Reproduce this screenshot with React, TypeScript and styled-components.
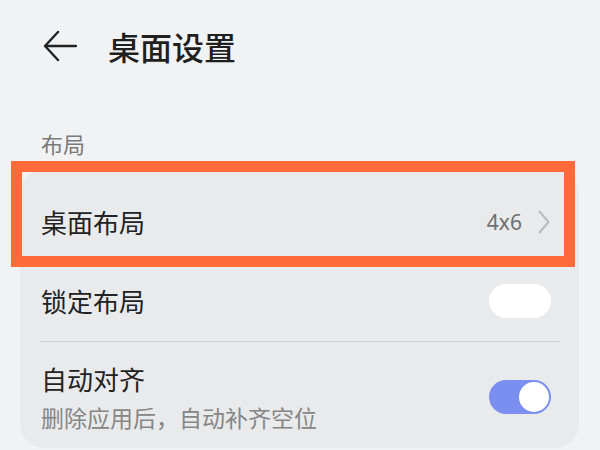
import React from "react";
import styled, { createGlobalStyle } from "styled-components";

const GlobalStyle = createGlobalStyle`
  html, body {
    margin: 0;
    padding: 0;
    background: #f1f2f4;
    font-family: "Noto Sans CJK SC", "Noto Sans", sans-serif;
  }
`;

const Page = styled.div`
  width: 600px;
  height: 450px;
  overflow: hidden;
  background: #f1f2f4;
`;

const Header = styled.div`
  display: flex;
  align-items: center;
  height: 92px;
  padding-left: 43px;
`;

const BackButton = styled.div`
  display: flex;
  width: 34px;
  height: 32px;
  margin-right: 31px;
  color: #222;
`;

const Title = styled.h1`
  margin: 0;
  font-size: 32px;
  font-weight: 500;
  color: #1f1f1f;
`;

const SectionLabel = styled.div`
  padding: 36px 0 0 41px;
  font-size: 22px;
  line-height: 30px;
  color: #7a7a7a;
`;

const Card = styled.div`
  position: relative;
  margin: 12px 21px 0 20px;
  background: #e9eaec;
  border-radius: 24px;
  padding: 0 20px 0 21px;
`;

const Row = styled.div<{ $height: number; $top?: number; $divider?: boolean }>`
  display: flex;
  align-items: center;
  box-sizing: border-box;
  height: ${(p) => p.$height}px;
  padding-top: ${(p) => p.$top ?? 0}px;
  border-bottom: ${(p) => (p.$divider ? "1px solid #cfd0d2" : "none")};
`;

const Texts = styled.div`
  flex: 1;
  display: flex;
  flex-direction: column;
`;

const Label = styled.div`
  font-size: 26px;
  color: #222;
  line-height: 34px;
`;

const Sub = styled.div`
  font-size: 23px;
  color: #868686;
  line-height: 30px;
  margin-top: 6px;
`;

const Value = styled.span`
  font-family: "Noto Sans", sans-serif;
  font-size: 21px;
  color: #6f6f6f;
  margin-right: 16px;
`;

const Chevron = styled.div`
  display: flex;
  width: 13px;
  margin-right: 8px;
`;

const Toggle = styled.div<{ $on?: boolean }>`
  position: relative;
  width: 62px;
  height: 34px;
  border-radius: 17px;
  margin-right: 8px;
  background: ${(p) => (p.$on ? "#7a8ff0" : "#ffffff")};
`;

const Knob = styled.div`
  position: absolute;
  right: 2px;
  top: 2px;
  width: 30px;
  height: 30px;
  border-radius: 50%;
  background: #fff;
`;

const Highlight = styled.div`
  position: absolute;
  left: -9px;
  right: 4px;
  top: -9px;
  height: 106px;
  border: 11px solid #ff6a3a;
  box-sizing: border-box;
  pointer-events: none;
`;

export default function App() {
  return (
    <Page>
      <GlobalStyle />
      <Header>
        <BackButton>
          <svg width="34" height="32" viewBox="0 0 34 32" fill="none">
            <path
              d="M33 16H3M15 2L2 16L15 30"
              stroke="#222"
              strokeWidth="2.4"
              strokeLinecap="round"
              strokeLinejoin="round"
            />
          </svg>
        </BackButton>
        <Title>桌面设置</Title>
      </Header>
      <SectionLabel>布局</SectionLabel>
      <Card>
        <Row $height={91} $top={13}>
          <Texts>
            <Label>桌面布局</Label>
          </Texts>
          <Value>4x6</Value>
          <Chevron>
            <svg width="12" height="24" viewBox="0 0 12 24" fill="none">
              <path
                d="M1.5 1.5L10.5 12L1.5 22.5"
                stroke="#b9babc"
                strokeWidth="2"
                strokeLinecap="round"
                strokeLinejoin="round"
              />
            </svg>
          </Chevron>
        </Row>
        <Row $height={81} $divider>
          <Texts>
            <Label>锁定布局</Label>
          </Texts>
          <Toggle />
        </Row>
        <Row $height={106} $top={4}>
          <Texts>
            <Label>自动对齐</Label>
            <Sub>删除应用后，自动补齐空位</Sub>
          </Texts>
          <Toggle $on>
            <Knob />
          </Toggle>
        </Row>
        <Highlight />
      </Card>
    </Page>
  );
}
